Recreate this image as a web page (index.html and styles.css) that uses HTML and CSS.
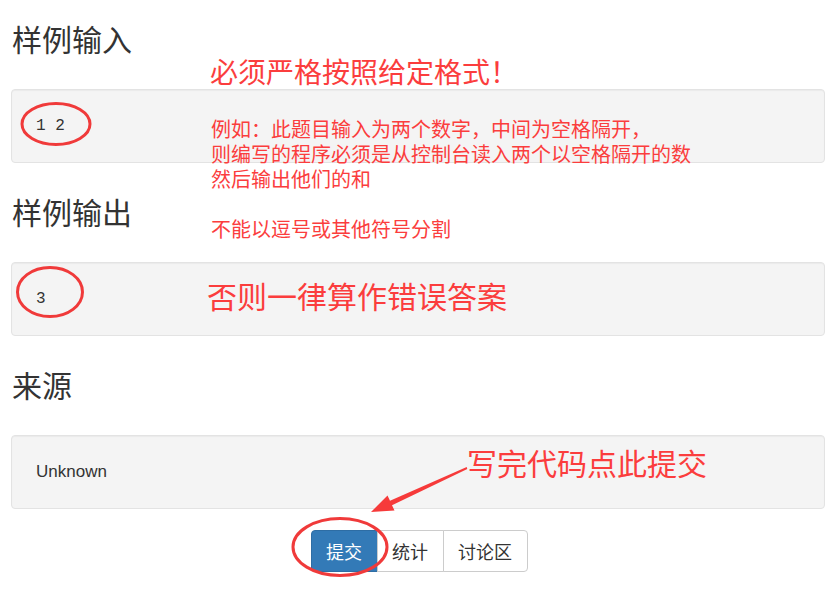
FILE: index.html
```html
<!DOCTYPE html>
<html>
  <head>
    <title>题目详情</title>
    <meta name="viewport" content="width=device-width,initial-scale=1">
    <link rel="stylesheet" href="styles.css">
  </head>
  <body>
    <div class="container">
      <h3 class="section-title">样例输入</h3>
      <div class="well"><pre class="sample">1 2</pre></div>

      <h3 class="section-title">样例输出</h3>
      <div class="well"><pre class="sample">3</pre></div>

      <h3 class="section-title">来源</h3>
      <div class="well source">Unknown</div>

      <div class="btn-row">
        <div class="btn-group">
          <button class="btn btn-primary">提交</button>
          <button class="btn">统计</button>
          <button class="btn">讨论区</button>
        </div>
      </div>
    </div>

    <!-- annotations drawn over the page -->
    <div class="note note-title">必须严格按照给定格式！</div>
    <div class="note note-detail">例如：此题目输入为两个数字，中间为空格隔开，<br>则编写的程序必须是从控制台读入两个以空格隔开的数<br>然后输出他们的和<br><br>不能以逗号或其他符号分割</div>
    <div class="note note-warn">否则一律算作错误答案</div>
    <div class="note note-submit">写完代码点此提交</div>

    <svg class="marks" width="829" height="598" viewBox="0 0 829 598">
      <ellipse cx="56" cy="124" rx="34" ry="20.5" />
      <ellipse cx="50" cy="292" rx="32.5" ry="24.5" />
      <ellipse cx="340" cy="547" rx="47" ry="28.5" />
      <polygon class="arrow" points="467.3,468.9 392,505.3 394.5,510.5 371,512 387.5,495.5 390,500.7 466.7,467.1" />
    </svg>
  </body>
</html>
```

FILE: styles.css
```css
body {
  margin: 0;
  background: #fff;
  color: #333;
  font-family: "Noto Sans CJK SC", "Liberation Sans", sans-serif;
  font-size: 17px;
}

.container {
  padding: 22px 4px 0 11px;
}

.section-title {
  margin: 0 0 34px 1px;
  font-size: 30px;
  font-weight: 400;
  line-height: 33px;
}

.well {
  background: #f4f4f4;
  border: 1px solid #e3e3e3;
  border-radius: 4px;
  box-shadow: inset 0 1px 1px rgba(0, 0, 0, 0.04);
  padding: 23px 24px;
  height: 26px;
  margin-bottom: 32px;
}

.sample {
  margin: 0;
  font-family: "Liberation Mono", monospace;
  font-size: 16px;
  line-height: 26px;
  color: #333;
}

.source {
  font-family: "Liberation Sans", sans-serif;
  font-size: 17px;
  line-height: 26px;
  margin-bottom: 21px;
}

.btn-row {
  display: flex;
  justify-content: center;
  padding-left: 2px;
}

.btn-group {
  display: flex;
}

.btn {
  height: 42px;
  padding: 0 14.5px;
  margin: 0;
  border: 1px solid #ccc;
  background: #fff;
  color: #333;
  font-family: "Noto Sans CJK SC", sans-serif;
  font-size: 18px;
  line-height: 40px;
}

.btn + .btn {
  margin-left: -1px;
}

.btn:first-child {
  border-radius: 4px 0 0 4px;
}

.btn:last-child {
  border-radius: 0 4px 4px 0;
}

.btn-primary {
  background: #337ab7;
  border-color: #2e6da4;
  color: #fff;
}

.note {
  position: absolute;
  color: #fb3d3d;
  font-family: "Noto Sans CJK SC", sans-serif;
  line-height: 1;
  white-space: nowrap;
}

.note-title {
  left: 210px;
  top: 57px;
  font-size: 28px;
}

.note-detail {
  left: 211px;
  top: 116px;
  font-size: 20px;
  line-height: 25px;
}

.note-warn {
  left: 207px;
  top: 280px;
  font-size: 30px;
}

.note-submit {
  left: 467px;
  top: 447px;
  font-size: 30px;
}

.marks {
  position: absolute;
  left: 0;
  top: 0;
  pointer-events: none;
}

.marks ellipse {
  fill: none;
  stroke: #f03a3a;
  stroke-width: 3;
}

.marks .arrow {
  fill: #f63a3a;
}
```
